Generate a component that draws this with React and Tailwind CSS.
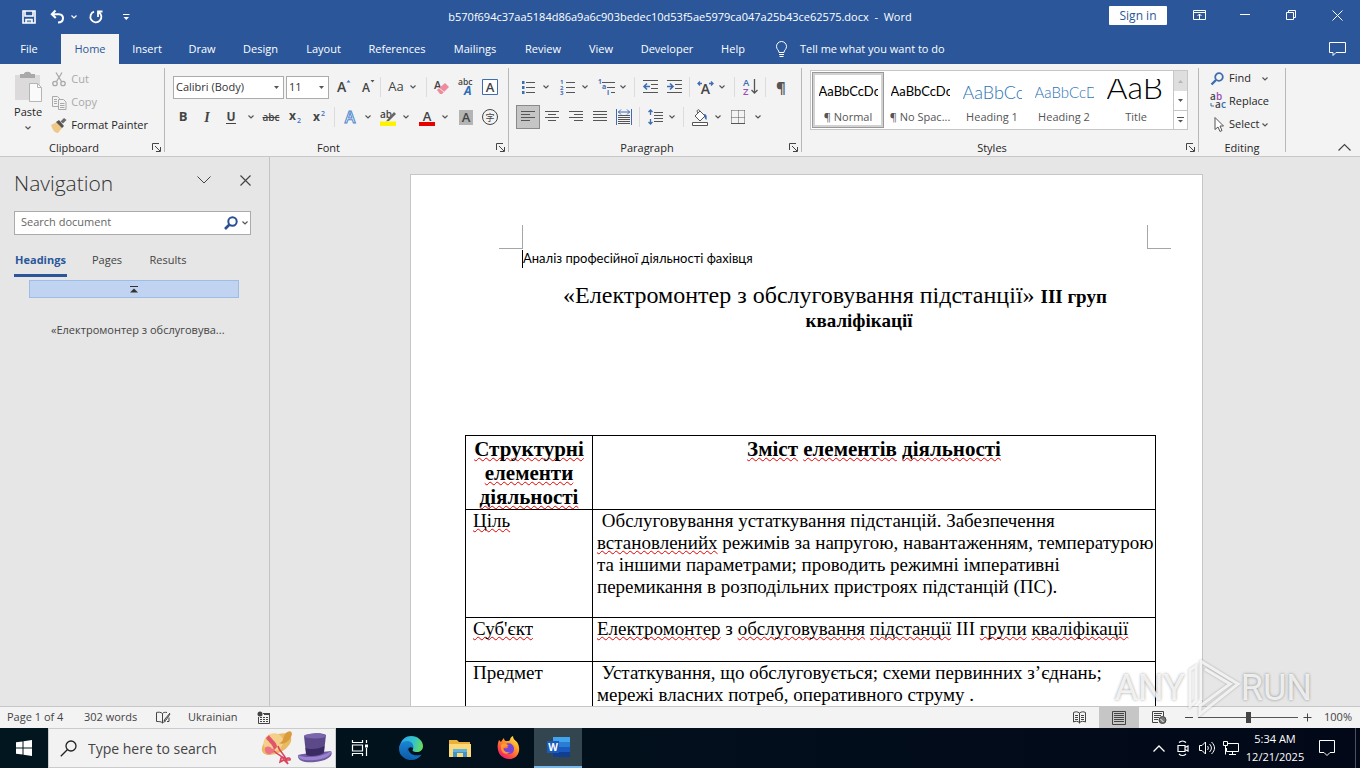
import React from "react";

const UI = "font-['Open_Sans','Noto_Sans',sans-serif]";
const SERIF = "font-['Liberation_Serif','Times_New_Roman',serif]";
const BODY = "font-['Lato','Open_Sans',sans-serif]";

function Svg({ w = 16, h = 16, className = "", children, ...rest }) {
  return (
    <svg width={w} height={h} viewBox={`0 0 ${w} ${h}`} fill="none" stroke="currentColor" strokeWidth="1" aria-hidden="true" className={`shrink-0 overflow-visible ${className}`} {...rest}>
      {children}
    </svg>
  );
}

function Glyph({ x, y, size = 12, fill = "#444", weight = 600, italic, anchor = "start", children, ...rest }) {
  return (
    <text x={x} y={y} fontSize={size} fill={fill} stroke="none" fontWeight={weight} fontStyle={italic ? "italic" : "normal"} textAnchor={anchor} fontFamily="'Open Sans','Noto Sans CJK SC',sans-serif" {...rest}>
      {children}
    </text>
  );
}

const Chevron = ({ className = "text-[#555]" }) => (
  <Svg w={6} h={4} className={className} strokeWidth="1.2"><path d="M.5.5 3 3 5.5.5" /></Svg>
);
const Caret = () => (
  <svg width="5" height="3" viewBox="0 0 5 3" className="shrink-0" aria-hidden="true"><path d="M0 0h5L2.5 3z" fill="#555" /></svg>
);

function Tool({ label, width = "w-6", active, children, height = "h-6" }) {
  return (
    <button type="button" aria-label={label} title={label} className={`flex shrink-0 items-center justify-center ${height} ${width} ${active ? "border border-[#8a8a8a] bg-[#c5c5c5]" : ""}`}>
      {children}
    </button>
  );
}
const More = ({ label, width = "w-3" }) => <Tool label={label} width={width}><Chevron /></Tool>;
const Rule = ({ margin = "mx-1" }) => <span className={`h-5 w-px shrink-0 bg-[#dcdcdc] ${margin}`} />;

function Lines({ rows, w = 14 }) {
  return <Svg w={w} h={12} className="text-[#555]"><path d={rows.map(([a, b], i) => `M${a} ${i * 3 + 0.5}H${b}`).join("")} /></Svg>;
}

const Launcher = ({ label }) => (
  <button type="button" aria-label={label} className="absolute right-[3px] bottom-0 text-[#444]">
    <Svg w={9} h={9} className="block"><path d="M.5 7V.5H7M3 3l5 5M8.500 4v4.500H4" /></Svg>
  </button>
);

function Group({ name, width, launcher, pad, children }) {
  return (
    <section aria-label={name} className={`relative my-1 flex shrink-0 flex-col border-r border-[#b8b8b8] ${width}`}>
      <div className={`h-[72px] shrink-0 ${pad}`}>{children}</div>
      <div className={`shrink-0 text-center text-[11px] leading-4 text-[#262626] ${launcher ? "pr-4" : ""}`}>{name}</div>
      {launcher && <Launcher label={`${name} settings`} />}
    </section>
  );
}

function TitleBar() {
  return (
    <header className="flex h-[34px] items-center text-white">
      <div className="flex flex-1 items-center">
        <button type="button" aria-label="Save" className="ml-[18px] flex w-[22px] justify-center">
          <Svg w={14} h={14} strokeWidth="1.6"><path d="M1 1h12v12H1zM3 1v5h8V1" /><path d="M4 13V9.500h6V13" fill="currentColor" fillOpacity=".35" /></Svg>
        </button>
        <button type="button" aria-label="Undo" className="ml-2 flex w-[18px] justify-center">
          <Svg w={15} h={14} strokeWidth="2"><path d="M5.500 .5 1.800 4.200l4 3.800M2 4.200h7c5.500 0 5.500 8.300-1 8.300" /></Svg>
        </button>
        <button type="button" aria-label="Undo history" className="ml-[5px]"><Chevron className="text-white" /></button>
        <button type="button" aria-label="Repeat" className="ml-[10px] flex w-[18px] justify-center">
          <Svg w={14} h={14} strokeWidth="1.800"><path d="M5 1.700A5.500 5.500 0 1 0 9.800 2.200M9 7V1.500h4.500" /></Svg>
        </button>
        <button type="button" aria-label="Customize toolbar" className="ml-[18px]">
          <Svg w={7} h={7}><path d="M0 .5h6.500" /><path d="M.5 3h5.500L3.250 6z" fill="currentColor" stroke="none" /></Svg>
        </button>
      </div>
      <h1 className="pt-px text-[11px] whitespace-pre">b570f694c37aa5184d86a9a6c903bedec10d53f5ae5979ca047a25b43ce62575.docx  -  Word</h1>
      <div className="flex flex-1 items-center justify-end pb-1">
        <button type="button" className="mr-[9px] h-[19px] w-[58px] rounded-[1px] bg-white pt-px text-[12px] leading-4 text-[#2b579a]">Sign in</button>
        <button type="button" aria-label="Ribbon display options" className="flex w-[46px] justify-center"><Svg w={13} h={10}><path d="M.5.5h12v9H.5zM.5 2.500h12M6.500 9V4M4.500 6l2-2 2 2" /></Svg></button>
        <button type="button" aria-label="Minimize" className="flex w-[46px] justify-center"><Svg w={10} h={10}><path d="M0 4.500h10" /></Svg></button>
        <button type="button" aria-label="Restore" className="flex w-[46px] justify-center"><Svg w={10} h={10}><path d="M.5 2.500h7v7h-7zM2.500 2.500v-2h7v7h-2" /></Svg></button>
        <button type="button" aria-label="Close" className="flex w-[46px] justify-center"><Svg w={11} h={11}><path d="m.5.5 10 10m0-10-10 10" /></Svg></button>
      </div>
    </header>
  );
}

const TABS = [
  ["Insert", "w-14"], ["Draw", "w-[54px]"], ["Design", "w-[63px]"], ["Layout", "w-[63px]"], ["References", "w-[84px]"],
  ["Mailings", "w-[72px]"], ["Review", "w-16"], ["View", "w-[52px]"], ["Developer", "w-20"], ["Help", "w-[52px]"],
];

function TabBar() {
  return (
    <nav aria-label="Ribbon tabs" className="flex h-[30px] items-stretch text-[11px] text-white">
      <button type="button" className="w-[58px]">File</button>
      <button type="button" aria-current="page" className="ml-[3px] w-[58px] bg-[#f3f3f3] pt-px text-[#2b579a]">Home</button>
      {TABS.map(([t, w]) => <button type="button" key={t} className={`shrink-0 pt-px ${w}`}>{t}</button>)}
      <button type="button" className="ml-4 flex items-center gap-3">
        <Svg w={13} h={17}><path d="M4 11.500C4 9 1.500 8.500 1.500 5.500a5 5 0 0 1 10 0C11.500 8.500 9 9 9 11.500zM4 13.500h5M4.500 15.500h4" /></Svg>
        <span>Tell me what you want to do</span>
      </button>
      <button type="button" aria-label="Comments" className="mr-[14px] ml-auto"><Svg w={17} h={15}><path d="M.5.5h16v10H7l-3 3v-3H.5z" /></Svg></button>
    </nav>
  );
}

function Clipboard() {
  return (
    <Group name="Clipboard" width="w-[165px]" launcher pad="flex pt-[2px] pl-[13px] pr-4">
      <button type="button" className="flex w-8 flex-col items-center text-[11px] leading-4 text-[#262626]">
        <Svg w={30} h={34} stroke="none"><path d="M2 5h25v25H2z" fill="#dcdada" /><path d="M7 8V4h4c0-3 7-3 7 0h4v4z" fill="#a9a9a9" /><path d="M16.500 13.500h8l4 4v14h-12z" fill="#fafafa" stroke="#b5b5b5" /><path d="M24.500 13.500v4h4" stroke="#b5b5b5" /></Svg>
        <span>Paste</span>
        <span className="flex h-4 items-center"><Chevron /></span>
      </button>
      <div className="ml-2 flex flex-col text-[11px] text-[#a9a9a9]">
        <button type="button" className="flex h-[23px] items-center gap-1 pb-1" disabled>
          <Svg w={16} h={15} strokeWidth="1.300"><path d="m5 .5 5.500 9M11 .5l-5.500 9" /><circle cx="4" cy="11.500" r="2.200" /><circle cx="12" cy="11.500" r="2.200" /></Svg>Cut
        </button>
        <button type="button" className="flex h-[23px] items-center gap-1 pb-1" disabled>
          <Svg w={16} h={14}><path d="M1.500.5h5l2 2v8h-7zM3 3.500h3M3 5.500h3M3 7.500h3" /><path d="M7.500 3.500h5l2.500 2.500v7.500H7.500z" fill="#f3f3f3" /><path d="M9 7.500h4.500M9 9.500h4.500M9 11.500h4.500" /></Svg>Copy
        </button>
        <button type="button" className="flex h-[23px] items-center gap-1 pb-1 whitespace-nowrap text-[#262626]">
          <Svg w={16} h={15} stroke="none"><path d="m0 7 6-3 6 5-5 6c-3 0-5-2-7-8z" fill="#efc888" /><path d="m5 4 3-2 5 6-2 2z" fill="#555" /><path d="m9.500 3.500 3.500-3.500 2.500 2-3.500 3.500z" fill="#6a6a6a" /></Svg>Format Painter
        </button>
      </div>
    </Group>
  );
}

function Combo({ label, value, width }) {
  return (
    <label className={`flex h-[23px] items-center border border-[#ababab] bg-white pr-1 ${width}`}>
      <select aria-label={label} defaultValue={value} className="w-full min-w-0 appearance-none bg-transparent pl-[2px] text-[11px] leading-5 text-[#333] outline-none">
        <option>{value}</option>
      </select>
      <Caret />
    </label>
  );
}

function FontGroup() {
  return (
    <Group name="Font" width="w-[344px]" launcher pad="pt-[7px] pl-[6px]">
      <div className="flex h-6 items-center pl-[2px]">
        <Combo label="Font name" value="Calibri (Body)" width="w-[111px]" />
        <span className="w-[2px]" />
        <Combo label="Font size" value="11" width="w-[43px]" />
        <span className="w-[3px]" />
        <Tool label="Increase font size"><Svg w={16} h={16}><Glyph x={1} y={13} size={14}>A</Glyph><path d="M10.500 3.500h4L12.500 1z" fill="#4472c4" stroke="none" /></Svg></Tool>
        <Tool label="Decrease font size"><Svg w={16} h={16}><Glyph x={2} y={13} size={12}>A</Glyph><path d="M10.500 1h4l-2 2.500z" fill="#555" stroke="none" /></Svg></Tool>
        <Rule margin="mr-1" />
        <Tool label="Change case" width="w-[22px]"><span className="text-[13px] font-medium text-[#444]">Aa</span></Tool>
        <More label="Change case options" width="w-3" />
        <Rule margin="ml-[7px] mr-[3px]" />
        <Tool label="Clear formatting"><Svg w={16} h={16}><Glyph x={0} y={10} size={11}>A</Glyph><path d="m3 11 8-7 4 4-7 7H6z" fill="#ef8b9d" stroke="none" /><path d="m5 9 5 4" stroke="#f8dfe3" /></Svg></Tool>
        <Tool label="Phonetic guide"><Svg w={16} h={18}><Glyph x={0} y={7} size={8.500}>abc</Glyph><Glyph x={6} y={17} size={12} fill="#2f6db5" weight={700} italic>A</Glyph></Svg></Tool>
        <Tool label="Character border"><Svg w={16} h={16}><path d="M.5.5h15v15H.5z" stroke="#3f6db0" fill="#fff" /><Glyph x={8} y={13} size={13} anchor="middle">A</Glyph></Svg></Tool>
      </div>
      <div className="mt-[6px] flex h-6 items-center text-[13px] text-[#444]">
        <Tool label="Bold"><b>B</b></Tool>
        <Tool label="Italic"><i className="font-['Liberation_Serif'] text-[14px] font-bold">I</i></Tool>
        <Tool label="Underline"><span className="border-b border-[#444] text-[12px] leading-[13px] font-bold">U</span></Tool>
        <More label="Underline options" width="w-4" />
        <Tool label="Strikethrough"><s className="text-[10px] font-semibold">abc</s></Tool>
        <Tool label="Subscript"><Svg w={14} h={14}><Glyph x={1} y={10} size={12} weight={700}>x</Glyph><Glyph x={9} y={13} size={7} fill="#4472c4">2</Glyph></Svg></Tool>
        <Tool label="Superscript"><Svg w={14} h={14}><Glyph x={1} y={11} size={12} weight={700}>x</Glyph><Glyph x={9} y={6} size={7} fill="#4472c4">2</Glyph></Svg></Tool>
        <Rule margin="mx-[3px]" />
        <Tool label="Text effects"><Svg w={16} h={16}><Glyph x={8} y={14} size={16} fill="#fff" weight={600} anchor="middle" style={{ stroke: "#4d86cf", strokeWidth: 1 }}>A</Glyph></Svg></Tool>
        <More label="Text effects options" width="w-3" />
        <span className="w-[2px]" />
        <Tool label="Highlight color"><Svg w={17} h={17}><Glyph x={0} y={9} size={10}>ab</Glyph><path d="m7 11 7-8 2 2-7 7-3 .5z" fill="#666" stroke="none" /><path d="M0 12.500h16V17H0z" fill="#fff200" stroke="none" /></Svg></Tool>
        <More label="Highlight options" width="w-3" />
        <span className="w-[3px]" />
        <Tool label="Font color"><Svg w={16} h={17}><Glyph x={8} y={12} size={13} anchor="middle">A</Glyph><path d="M0 13h16v4H0z" fill="#e60000" stroke="none" /></Svg></Tool>
        <More label="Font color options" width="w-3" />
        <span className="w-[3px]" />
        <Tool label="Character shading"><Svg w={14} h={15}><path d="M0 0h14v15H0z" fill="#b4b4b4" stroke="none" /><Glyph x={7} y={12} size={13} anchor="middle">A</Glyph></Svg></Tool>
        <Tool label="Enclose characters"><Svg w={16} h={16}><circle cx="8" cy="8" r="7.500" /><Glyph x={8} y={11.500} size={9} weight={400} anchor="middle">字</Glyph></Svg></Tool>
      </div>
    </Group>
  );
}

const BLUE = "#3f6db0";

function ParagraphGroup() {
  return (
    <Group name="Paragraph" width="w-[293px]" launcher pad="pt-[7px] pl-[7px]">
      <div className="flex h-6 items-center text-[#555]">
        <Tool label="Bullets"><Svg w={14} h={15}><path d="M5 2.500h9M5 7.500h9M5 12.500h9" /><path d="M1 1h2.500v3H1zM1 6h2.500v3H1zM1 11h2.500v3H1z" fill={BLUE} stroke="none" /></Svg></Tool>
        <More label="Bullet options" />
        <span className="w-[3px]" />
        <Tool label="Numbering"><Svg w={15} h={16}><path d="M6 3.500h9M6 8.500h9M6 13.500h9" /><Glyph x={0} y={5} size={6} fill={BLUE} weight={700}>1</Glyph><Glyph x={0} y={10.500} size={6} fill={BLUE} weight={700}>2</Glyph><Glyph x={0} y={16} size={6} fill={BLUE} weight={700}>3</Glyph></Svg></Tool>
        <More label="Numbering options" />
        <span className="w-[3px]" />
        <Tool label="Multilevel list"><Svg w={17} h={16}><path d="M4 3.500h13M9 8.500h8M13 13.500h4" /><Glyph x={0} y={5} size={6.500} fill={BLUE} weight={700}>1</Glyph><Glyph x={4} y={10} size={7} fill={BLUE} weight={700}>a</Glyph><Glyph x={9} y={16} size={7} fill={BLUE} weight={700}>i</Glyph></Svg></Tool>
        <More label="Multilevel options" width="w-[10px]" />
        <Rule margin="ml-[6px] mr-[3px]" />
        <Tool label="Decrease indent"><Svg w={17} h={14}><path d="M1 .5h15M9 4.500h7M9 8.500h7M1 12.500h15" /><path d="M8 6.500H2M5 3.500l-3 3 3 3" stroke={BLUE} strokeWidth="1.600" /></Svg></Tool>
        <Tool label="Increase indent"><Svg w={17} h={14}><path d="M1 .5h15M9 4.500h7M9 8.500h7M1 12.500h15" /><path d="M1 6.500h6M4 3.500l3 3-3 3" stroke={BLUE} strokeWidth="1.600" /></Svg></Tool>
        <Rule margin="mx-[3px]" />
        <Tool label="Asian layout"><Svg w={17} h={15}><Glyph x={8.500} y={14} size={14} anchor="middle">A</Glyph><path d="M5 3.500H1M3 1.500l-2 2 2 2M12 3.500h4M14 1.500l2 2-2 2" stroke={BLUE} strokeWidth="1.300" /></Svg></Tool>
        <More label="Asian layout options" width="w-[10px]" />
        <Rule margin="mx-[7px]" />
        <Tool label="Sort" width="w-4"><Svg w={15} h={18}><Glyph x={0} y={8} size={9.500} fill={BLUE}>A</Glyph><Glyph x={0} y={17} size={9.500} fill="#9a4fb5">Z</Glyph><path d="M11.500 1v14M8.500 12l3 3 3-3" strokeWidth="1.300" /></Svg></Tool>
        <Rule margin="mx-[7px]" />
        <Tool label="Show paragraph marks" width="w-4"><span className="text-[15px] font-bold">¶</span></Tool>
      </div>
      <div className="mt-[6px] flex h-6 items-center">
        <Tool label="Align left" active><Lines rows={[[0, 14], [0, 9], [0, 14], [0, 9]]} /></Tool>
        <Tool label="Center"><Lines rows={[[0, 14], [3, 11], [0, 14], [3, 11]]} /></Tool>
        <Tool label="Align right"><Lines rows={[[0, 14], [5, 14], [0, 14], [5, 14]]} /></Tool>
        <Tool label="Justify"><Lines rows={[[0, 14], [0, 14], [0, 14], [0, 14]]} /></Tool>
        <Tool label="Distribute"><Svg w={16} h={16} className="text-[#555]"><path d="M2 6.500h12M2 8.500h12M2 10.500h12M2 12.500h12M2 14.500h12" /><path d="M.5 0v16M15.500 0v16M2 3h12M5 .5 2.500 3 5 5.500M11 .5 13.500 3 11 5.500" stroke={BLUE} /></Svg></Tool>
        <Rule margin="mx-[3px]" />
        <Tool label="Line spacing"><Svg w={15} h={16} className="text-[#555]"><path d="M6 3.500h9M6 6.500h9M6 9.500h9M6 12.500h9" /><path d="M2.500 1v5M2.500 10v5M.5 3l2-2 2 2M.5 13l2 2 2-2" stroke={BLUE} strokeWidth="1.300" /></Svg></Tool>
        <More label="Line spacing options" width="w-[10px]" />
        <Rule margin="ml-[6px] mr-1" />
        <Tool label="Shading"><Svg w={17} h={17} className="text-[#555]"><path d="m3 7 5-5 5 5-5 5z" fill="#fff" /><path d="M8 2C6-1 4 2 6 4" /><path d="M12 5c3 0 3 3 2.500 6-2-1-2-3-2.500-6z" fill={BLUE} stroke="none" /><path d="M.5 13.500h15v3H.5z" fill="#fff" /></Svg></Tool>
        <More label="Shading options" />
        <Tool label="Borders" width="w-7"><Svg w={14} h={14} className="text-[#555]"><path d="M.5.5h13M.5 7.500h13M.5.500v13M7.500.500v13M13.500.500v13" strokeDasharray="1 1" /><path d="M0 13.500h14" /></Svg></Tool>
        <More label="Border options" />
      </div>
    </Group>
  );
}

const STYLES = [
  ["¶ Normal", "AaBbCcDc", "text-[13px] text-black"],
  ["¶ No Spac...", "AaBbCcDc", "text-[13px] text-black"],
  ["Heading 1", "AaBbCc", "text-[18px] font-light text-[#2e74b5]"],
  ["Heading 2", "AaBbCcDd", "text-[15px] font-light text-[#2e74b5]"],
  ["Title", "AaB", "pb-[10px] text-[32px] font-light text-black"],
];

function StylesGroup() {
  return (
    <Group name="Styles" width="w-[397px]" launcher pad="pt-[2px] pl-2 pr-[10px]">
      <div className="flex h-[60px] border border-[#c6c6c6] bg-white">
        <div className="flex flex-1 p-px">
          {STYLES.map(([name, sample, cls], i) => (
            <button type="button" key={name} aria-pressed={i === 0} className={`flex w-[72px] shrink-0 flex-col items-center border-[3px] ${i === 0 ? "border-[#d2d2d2] outline outline-1 -outline-offset-1 outline-[#999]" : "border-transparent"}`}>
              <span className={`mt-1 mb-1 flex h-[26px] w-[59px] shrink-0 items-center overflow-hidden whitespace-nowrap ${BODY} ${cls}`}>{sample}</span>
              <span className="text-[11px] leading-4 whitespace-nowrap text-[#555]">{name}</span>
            </button>
          ))}
        </div>
        <div className="flex w-[15px] flex-col border-l border-[#c6c6c6]">
          <button type="button" aria-label="Previous styles" className="flex h-5 items-center justify-center bg-[#dedede]"><Svg w={5} h={3} stroke="none"><path d="M0 3h5L2.500 0z" fill="#b5b5b5" /></Svg></button>
          <button type="button" aria-label="Next styles" className="flex h-5 items-center justify-center border-b border-[#c6c6c6]"><Caret /></button>
          <button type="button" aria-label="All styles" className="flex flex-1 items-center justify-center"><Svg w={7} h={6}><path d="M0 .5h7" stroke="#555" /><path d="M1 3h5L3.500 5.500z" fill="#555" stroke="none" /></Svg></button>
        </div>
      </div>
    </Group>
  );
}

function EditingGroup() {
  return (
    <Group name="Editing" width="w-[87px]" pad="flex flex-col pt-px pl-[11px] text-[11px] text-[#262626]">
      <button type="button" className="flex h-[23px] items-center gap-[3px] pb-1">
        <Svg w={16} h={14} strokeWidth="1.800" className="text-[#3f6db0]"><circle cx="9" cy="5" r="3.800" /><path d="M6 8 1.500 12.500" strokeWidth="2.400" /></Svg>Find<span className="ml-2"><Chevron /></span>
      </button>
      <button type="button" className="flex h-[23px] items-center gap-[3px] pb-1">
        <Svg w={16} h={17}><Glyph x={0} y={7} size={10}>a</Glyph><Glyph x={6} y={7} size={10} fill="#9a4fb5">b</Glyph><Glyph x={5} y={15} size={10}>a</Glyph><Glyph x={11} y={15} size={10} fill={BLUE}>c</Glyph><path d="M1 10v3h3" stroke={BLUE} /></Svg>Replace
      </button>
      <button type="button" className="flex h-[23px] items-center gap-[3px] pb-1">
        <Svg w={16} h={16} className="text-[#555]"><path d="M5 .5v12l3-2.500 2 4.500 2-1-2-4.500h3.500z" fill="#fff" /></Svg>Select<span><Chevron /></span>
      </button>
    </Group>
  );
}

function Navigation() {
  return (
    <aside aria-label="Navigation" className="w-[270px] shrink-0 border-r border-[#c3c3c3]">
      <div className="flex h-[54px] items-center pr-[18px] pl-[14px] text-[#444]">
        <h2 className="flex-1 text-[21px] font-light text-[#333]">Navigation</h2>
        <button type="button" aria-label="Pane options" className="mb-2"><Svg w={14} h={8}><path d="m.5.500 6.500 6.500L13.500.5" /></Svg></button>
        <button type="button" aria-label="Close pane" className="mb-2 ml-[29px]"><Svg w={11} h={11} strokeWidth="1.200"><path d="m.5.5 10 10m0-10-10 10" /></Svg></button>
      </div>
      <div className="mr-[18px] ml-[14px] flex h-6 items-center border border-[#ababab] bg-white pr-[2px]">
        <input type="text" aria-label="Search document" placeholder="Search document" className="min-w-0 flex-1 bg-transparent pb-px pl-[6px] text-[11px] outline-none placeholder:text-[#666]" />
        <button type="button" aria-label="Search" className="text-[#2b4f93]"><Svg w={14} h={14} strokeWidth="2"><circle cx="8.500" cy="5.500" r="4.200" /><path d="M5.500 8.500 1 13" strokeWidth="2.600" /></Svg></button>
        <button type="button" aria-label="Search options" className="ml-1"><Chevron /></button>
      </div>
      <div role="tablist" className="mt-[14px] flex h-7 pl-[14px] text-[11px] text-[#444]">
        <button type="button" role="tab" aria-selected="true" className="w-[53px] border-b-[3px] border-[#2b579a] pb-[3px] font-bold text-[#2b579a]">Headings</button>
        <button type="button" role="tab" aria-selected="false" className="ml-[17px] w-[46px] border-b-[3px] border-transparent pb-[3px]">Pages</button>
        <button type="button" role="tab" aria-selected="false" className="ml-3 w-[52px] border-b-[3px] border-transparent pb-[3px]">Results</button>
      </div>
      <button type="button" aria-label="Jump to top" className="mt-[3px] ml-[29px] flex h-[18px] w-[210px] items-center justify-center border border-[#9fbce6] bg-[#c0d3f1] text-[#333]">
        <Svg w={8} h={7}><path d="M0 .5h8" /><path d="M0 6.500h8L4 2.500z" fill="currentColor" stroke="none" /></Svg>
      </button>
      <a href="#heading" className="mt-6 ml-[51px] block text-[11px] leading-4 whitespace-nowrap text-[#444]">«Електромонтер з обслуговува...</a>
    </aside>
  );
}

const Sp = ({ children }) => <span className="underline decoration-[#e60000] decoration-wavy decoration-1 underline-offset-1 [text-decoration-skip-ink:none]">{children}</span>;

function DocumentTable() {
  const head = "border border-black p-0 pt-px text-center align-top text-[21px] leading-[24px] font-bold";
  const label = "border border-black px-[7px] py-0 align-top";
  const cell = "border border-black px-1 py-0 align-top";
  return (
    <table className="mt-[102px] -mr-[8px] ml-[-57px] w-[691px] table-fixed border-collapse text-[19px] leading-[22px] whitespace-nowrap">
      <colgroup><col className="w-[127px]" /><col /></colgroup>
      <thead>
        <tr className="h-[74px]">
          <th scope="col" className={head}><Sp>Структурні</Sp><br /><Sp>елементи</Sp><br /><Sp>діяльності</Sp></th>
          <th scope="col" className={head}><Sp>Зміст</Sp> <Sp>елементів</Sp> <Sp>діяльності</Sp></th>
        </tr>
      </thead>
      <tbody>
        <tr className="h-[108px]">
          <td className={label}><Sp>Ціль</Sp></td>
          <td className={cell}>&nbsp;Обслуговування устаткування підстанцій. Забезпечення<br /><Sp>встановленийх</Sp> режимів за напругою, навантаженням, температурою<br />та іншими параметрами; проводить режимні імперативні<br />перемикання в розподільних пристроях підстанцій (ПС).</td>
        </tr>
        <tr className="h-11">
          <td className={label}><Sp>Суб'єкт</Sp></td>
          <td className={cell}><Sp>Електромонтер</Sp> з <Sp>обслуговування</Sp> <Sp>підстанції</Sp> ІІІ <Sp>групи</Sp> <Sp>кваліфікації</Sp></td>
        </tr>
        <tr className="h-11">
          <td className={label}>Предмет</td>
          <td className={cell}>&nbsp;Устаткування, що обслуговується; схеми первинних з’єднань;<br />мережі власних потреб, оперативного струму .</td>
        </tr>
        <tr className="h-11"><td className={label} /><td className={cell} /></tr>
      </tbody>
    </table>
  );
}

function Page() {
  return (
    <article className="mx-auto mt-[17px] w-[793px] border border-[#c6c6c6] bg-white text-black">
      <div className="flex justify-between pt-[50px] pr-[31px] pl-[88px]">
        <span className="h-6 w-6 border-r border-b border-[#a6a6a6]" />
        <span className="h-6 w-6 border-b border-l border-[#a6a6a6]" />
      </div>
      <div className={`pr-[54px] pl-[111px] ${SERIF}`}>
        <p className={`flex h-5 items-center text-[13px] ${BODY}`}><span className="h-[18px] w-px bg-black" />Аналіз професійної діяльності фахівця</p>
        <h2 id="heading" className="mt-[14px] text-center text-[24px] leading-6 whitespace-nowrap">«Електромонтер з обслуговування підстанції» <b className="text-[19px]">ІІІ груп</b></h2>
        <p className="pl-12 text-center text-[19px] leading-6 font-bold">кваліфікації</p>
        <DocumentTable />
      </div>
    </article>
  );
}

function StatusBar() {
  return (
    <footer className="flex h-[22px] shrink-0 items-center border-t border-[#c6c6c6] bg-[#f3f3f3] text-[11px] text-[#444]">
      <span className="w-[84px] pl-[7px]">Page 1 of 4</span>
      <span className="w-[71px]">302 words</span>
      <button type="button" aria-label="Proofing" className="w-[33px]"><Svg w={16} h={14}><path d="M7.500 2.500C6 1 3 1 1.500 1.500v9c2 0 5 0 6 1.500 1-1 2-1.500 3-1.500M7.500 2.500V12M7.500 2.500C8 1.500 10 1 12 1.500M15 2l-5 6-1 2 2-1 4-6M12 10.500h2v-4" /></Svg></button>
      <span className="w-[69px]">Ukrainian</span>
      <button type="button" aria-label="Macro recording"><Svg w={13} h={13}><path d="M6 2.500h6.500v10H1.500V6M3 6.500h2M6 6.500h2M9 6.500h2M3 8.500h2M6 8.500h2M9 8.500h2M3 10.500h2M6 10.500h2M9 10.500h2" /><circle cx="3" cy="3" r="2.500" fill="currentColor" stroke="none" /><path d="M7 2h6v2H7z" fill="currentColor" stroke="none" /></Svg></button>
      <div className="ml-auto flex h-full items-center">
        <button type="button" aria-label="Read mode" className="flex h-full w-10 items-center justify-center"><Svg w={13} h={13}><path d="M6.500 2v10.500M.5 1.500c2-1 4-1 6 .5 2-1.500 4-1.500 6-.5v9.500c-2-1-4-1-6 .5-2-1.500-4-1.500-6-.5zM2 4.500h3M2 6.500h3M2 8.500h3M8 4.500h3M8 6.500h3M8 8.500h3" /></Svg></button>
        <button type="button" aria-label="Print layout" aria-pressed="true" className="flex h-full w-10 items-center justify-center bg-[#c6c6c6]"><Svg w={14} h={14}><path d="M.5.500h13v13H.5zM2 2.500h10M2 4.500h10M2 6.500h10M2 8.500h10M2 10.500h10" /></Svg></button>
        <button type="button" aria-label="Web layout" className="flex h-full w-10 items-center justify-center"><Svg w={15} h={14}><path d="M6 11.500H.5V.5h11v5M2 2.500h8M2 4.500h7M2 6.500h5M2 8.500h4" /><circle cx="10.500" cy="9" r="3.500" fill="#777" /><path d="m8.500 8 3 3" stroke="#fff" /></Svg></button>
        <button type="button" aria-label="Zoom out" className="ml-[5px]"><Svg w={9} h={9}><path d="M1 4.500h8" /></Svg></button>
        <input type="range" aria-label="Zoom" min="10" max="190" defaultValue="100" className="mx-[5px] h-[11px] w-[100px] appearance-none bg-[linear-gradient(#555,#555)] bg-[length:100%_1px] bg-center bg-no-repeat [&::-webkit-slider-thumb]:h-[11px] [&::-webkit-slider-thumb]:w-[5px] [&::-webkit-slider-thumb]:appearance-none [&::-webkit-slider-thumb]:bg-[#444]" />
        <button type="button" aria-label="Zoom in"><Svg w={9} h={9}><path d="M.5 4.500h8M4.500.5v8" /></Svg></button>
        <span className="w-12 pr-2 text-right">100%</span>
      </div>
    </footer>
  );
}

const HATS = (
  <svg width="72" height="36" viewBox="0 0 72 36" aria-hidden="true" className="mr-[2px] shrink-0">
    <g transform="rotate(-28 16 15)"><ellipse cx="16" cy="14" rx="16" ry="9" fill="#e9b964" /><ellipse cx="14" cy="11" rx="10" ry="9" fill="#f4cf8a" /></g>
    <path d="M24 4c4-5 9-3 6 3s-9 8-12 6c5-1 4-6 6-9z" fill="#d99b3c" />
    <path d="M8 5c2 4 8 7 8 12l-3 3C12 14 6 11 5 8z" fill="#e0546c" />
    <path d="M4 18c3-3 6-1 7 1 3-1 4 4 0 4-3 3-8 0-7-5z" fill="#ef6f86" />
    <path d="M13 21c4 4 8 5 10 8M17 16c1 5 6 8 8 13M20 28c2-2 4 0 5 1 2-2 5-1 4 1l-4 0 2 4-4-4-4 2z" stroke="#d8455f" strokeWidth="1.500" fill="#ef6f86" fillOpacity=".6" />
    <path d="M37 25c8-2 22-3 33-4 3 5-4 10-16 11-10 1-18-1-17-7z" fill="#6f5aa3" />
    <path d="M37 25c8 4 25 2 33-4 1 3-4 8-16 9-8 1-17 0-17-5z" fill="#9b84cf" />
    <path d="M43 6c5-3 18-4 22-1l-2 17c-4 3-14 4-18 2z" fill="#5c4989" />
    <path d="M44.500 18c5 2 14 1 19-2l-.7 7c-4 3-14 4-17.500 2z" fill="#3a2c63" />
    <ellipse cx="54" cy="6" rx="11" ry="2.500" fill="#7a66ad" />
  </svg>
);

function Taskbar() {
  return (
    <footer className="flex h-10 shrink-0 bg-linear-to-r from-[#02161f] to-[#020818] text-white">
      <button type="button" aria-label="Start" className="flex w-12 items-center justify-center">
        <Svg w={16} h={16} stroke="none"><path d="M0 2.300 6.500 1.400V7.500H0zM7.500 1.200 16 0v7.500H7.500zM0 8.500h6.500v6.100L0 13.700zM7.500 8.500H16V16l-8.500-1.200z" fill="#fff" /></Svg>
      </button>
      <label className="flex w-72 items-center border border-[#c9cbcc] bg-[#f2f2f2] pl-[11px] text-[#222]">
        <Svg w={17} h={17} strokeWidth="1.300"><circle cx="11" cy="6" r="5" /><path d="M7.500 9.500.8 16.200" /></Svg>
        <input type="text" aria-label="Search" placeholder="Type here to search" className="min-w-0 flex-1 bg-transparent pl-[11px] text-[14px] outline-none placeholder:text-[#444]" />
        {HATS}
      </label>
      <button type="button" aria-label="Task view" className="flex w-12 items-center justify-center">
        <Svg w={17} h={16} strokeWidth="1.200"><path d="M.5 0v2.500h10V0M.5 5h10v6H.5zM.5 16v-2.500h10V16M14.500 0v3M14.500 8v8" /><path d="M13 4.500h3v3h-3z" fill="#fff" stroke="none" /></Svg>
      </button>
      <button type="button" aria-label="Edge" className="ml-[3px] flex w-12 items-center justify-center">
        <svg width="24" height="24" viewBox="0 0 24 24" aria-hidden="true">
          <defs><linearGradient id="e1" x1="0" y1=".3" x2="1" y2=".5"><stop offset="0" stopColor="#2aa7e8" /><stop offset=".6" stopColor="#35c4c8" /><stop offset="1" stopColor="#6bdc5a" /></linearGradient><linearGradient id="e2" x1="0" y1="0" x2="0" y2="1"><stop offset="0" stopColor="#1b86d6" /><stop offset="1" stopColor="#0c59a4" /></linearGradient></defs>
          <path d="M1 9C3 3 7 0 12 0c7 0 12 5 12 10 0 4-3 6-6 6-4 0-5-1-4-3 1-3-1-6-5-6S2 9 1 12z" fill="url(#e1)" />
          <path d="M0 12c0-4 4-7 8-7 5 0 7 4 6 7-3-2-6 0-5 4 1 4 6 6 13 3-5 7-14 6-18 2-3-2-4-5-4-9z" fill="url(#e2)" />
          <path d="M9 11c-2 5 0 10 6 12 3 0 6-2 7.500-4.500C16 21 9 18 9 11z" fill="#1068b8" />
        </svg>
      </button>
      <button type="button" aria-label="File Explorer" className="ml-px flex w-12 items-center justify-center">
        <Svg w={22} h={19} stroke="none"><path d="M0 1h8l2 2h11v15H0z" fill="#e9b13b" /><path d="M0 5h22v13H0z" fill="#fcd978" /><path d="M4 18v-8h14v8h-4v-4H8v4z" fill="#3f93c9" /><path d="M4 10h14v3H4z" fill="#5fb1de" /></Svg>
      </button>
      <button type="button" aria-label="Firefox" className="ml-px flex w-12 items-center justify-center">
        <svg width="24" height="24" viewBox="0 0 24 24" aria-hidden="true">
          <defs><linearGradient id="fx" x1=".9" y1="0" x2=".2" y2="1"><stop offset="0" stopColor="#fff14f" /><stop offset=".4" stopColor="#ff9a2a" /><stop offset=".75" stopColor="#ff4545" /><stop offset="1" stopColor="#e31587" /></linearGradient></defs>
          <path d="M2 4c1 1 1 1 2 2 1-2 2-3 3-4 0 2 1 3 2 3 2 0 3 0 4-1 0-2 1-3 3-4 0 3 2 4 4 6 5 8 1 17-8 17C3 23-2 14 2 4z" fill="url(#fx)" />
          <path d="M8 9c2-3 9-2 9 4 0 4-3 5-5 5-4 0-6-3-5-6 2 1 4 0 4-1 0-1-2-1-3-2z" fill="#7545d8" />
          <path d="M4 9c3-3 6-1 8 1-3-1-3 2-6 2 1 4 4 5 7 4-4 4-10 1-9-7z" fill="#ff9a32" />
        </svg>
      </button>
      <button type="button" aria-label="Word" className="ml-px flex w-12 items-center justify-center border-b-2 border-[#76b9ed] bg-[#33454f]">
        <Svg w={25} h={22} stroke="none"><path d="M7 1h17v5H7z" fill="#41a5ee" /><path d="M7 6h17v5H7z" fill="#2b7cd3" /><path d="M7 11h17v5H7z" fill="#185abd" /><path d="M7 16h17v5H7z" fill="#103f91" /><path d="M1 5h12v12H1z" fill="#185abd" /><Glyph x={7} y={15} size={10} fill="#fff" weight={700} anchor="middle">W</Glyph></Svg>
      </button>
      <div className="ml-auto flex items-center">
        <button type="button" aria-label="Hidden icons" className="flex w-6 justify-center"><Svg w={12} h={7} strokeWidth="1.300"><path d="m.5 6.500 5.500-5.500 5.500 5.500" /></Svg></button>
        <button type="button" aria-label="Meet now" className="flex w-6 justify-center"><Svg w={12} h={16} strokeWidth="1.200"><path d="M1 5.500h7v6H1zM8 7.500l3-1.500v5L8 9.500M2 2.500c2-2 5-2 7 0M2 14c2 2 5 2 7 0" /></Svg></button>
        <button type="button" aria-label="Volume" className="flex w-6 justify-center"><Svg w={17} h={14}><path d="M.5 4.500H3l3.500-3.500v12L3 9.500H.5zM8.500 5c1 1 1 3 0 4M10.500 3c2.500 2.500 2.500 5.500 0 8M12.500 1c4 4 4 8 0 12" /></Svg></button>
        <button type="button" aria-label="Network" className="flex w-6 justify-center"><Svg w={16} h={14}><path d="M5 2.500h10.500v8h-12V7M9.500 10.500v3M6 13.500h7M.5.500h4v4h-4zM2.500 4.500v9" /></Svg></button>
        <div className="w-16 text-center text-[11px] leading-[18px]"><div>5:34 AM</div><div>12/21/2025</div></div>
        <button type="button" aria-label="Notifications" className="mr-[19px] ml-[11px] flex w-[18px] justify-center"><Svg w={17} h={17}><path d="M.5.500h15v12H11l-3 3-3-3H.5z" /></Svg></button>
        <span className="mr-1 h-10 w-px bg-[#4a5060]" />
      </div>
    </footer>
  );
}

function Watermark() {
  return (
    <div aria-hidden="true" className="pointer-events-none absolute right-12 bottom-[46px] flex h-[68px] items-center font-['Roboto',sans-serif] text-[36px] text-white/80 [text-shadow:0_0_3px_#0006]">
      <span>ANY</span>
      <svg width="56" height="64" viewBox="0 0 56 64" fill="none" stroke="#fff" strokeOpacity=".8" strokeWidth="3" className="drop-shadow-[0_0_1px_#0005]"><path d="M16 4v40M17 6l36 22-38 30v-8l30-22-25-15" /><path d="M5 14v36l6-5V10z" /></svg>
      <span>RUN</span>
    </div>
  );
}

export default function App() {
  return (
    <div className={`relative flex h-screen flex-col overflow-hidden ${UI}`}>
      <div className="shrink-0 bg-[#2b579a]"><TitleBar /><TabBar /></div>
      <div className="relative flex h-[93px] shrink-0 border-b border-[#c8c8c8] bg-[#f3f3f3]">
        <Clipboard /><FontGroup /><ParagraphGroup /><StylesGroup /><EditingGroup />
        <button type="button" aria-label="Collapse ribbon" className="mr-[9px] mb-[5px] ml-auto self-end text-[#444]"><Svg w={13} h={7} strokeWidth="1.200"><path d="m.5 6.500 6-6 6 6" /></Svg></button>
      </div>
      <div className="flex min-h-0 flex-1 bg-[#e6e6e6]">
        <Navigation />
        <main className="min-w-0 flex-1 overflow-hidden pr-[17px]"><Page /></main>
      </div>
      <StatusBar />
      <Taskbar />
      <Watermark />
    </div>
  );
}
